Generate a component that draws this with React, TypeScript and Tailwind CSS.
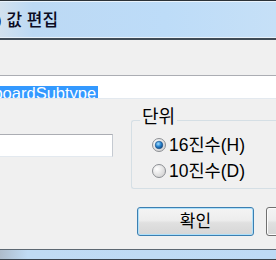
import React from "react";

function Radio({ checked, label }: { checked?: boolean; label: string }) {
  return (
    <div className="flex items-center h-[20px] gap-[3px]">
      <svg width="14" height="14" viewBox="0 0 14 14" className="shrink-0">
        <defs>
          <radialGradient id={checked ? "rgc" : "rgu"} cx="0.35" cy="0.35" r="0.75">
            <stop offset="0" stopColor="#ffffff" />
            <stop offset="1" stopColor="#d0d0d0" />
          </radialGradient>
          <radialGradient id="dot" cx="0.4" cy="0.35" r="0.7">
            <stop offset="0" stopColor="#a8e0ff" />
            <stop offset="0.5" stopColor="#2a86d0" />
            <stop offset="1" stopColor="#0b3f78" />
          </radialGradient>
        </defs>
        <circle cx="7" cy="7" r="6.5" fill={checked ? "url(#rgc)" : "url(#rgu)"} stroke="#8c8f93" strokeWidth="1" />
        {checked && <circle cx="7" cy="7" r="3.8" fill="url(#dot)" stroke="#1b4f86" strokeWidth="0.6" />}
      </svg>
      <span className="text-[17.5px] leading-[20px] whitespace-nowrap">{label}</span>
    </div>
  );
}

export default function App() {
  return (
    <div className="w-[276px] h-[260px] overflow-hidden flex flex-col bg-[#f0f0f0] text-black font-['Liberation_Sans','Noto_Sans_CJK_KR',sans-serif]">
      {/* title bar */}
      <div className="h-[1px] shrink-0 bg-[#2b3238]" />
      <div className="h-[36px] shrink-0 flex items-center pt-[2px] border-t border-[#e9f3fc] bg-[linear-gradient(90deg,#d2e1ee_0%,#bcd9f4_12%,#bddcf8_60%,#c6e0f7_100%)] text-[17px] font-medium text-[#0a0a22] whitespace-nowrap">
        <span className="-ml-[4px]">) 값 편집</span>
      </div>
      <div className="h-[1px] shrink-0 bg-[#e7f1fa]" />
      <div className="h-[2px] shrink-0 bg-[#3f4b56]" />

      {/* body */}
      <div className="flex-1 flex flex-col min-h-0">
        <div className="mt-[35px] h-[24px] shrink-0 bg-white border-t border-b border-t-[#abadb3] border-b-[#e3e9ef] pt-[6px] whitespace-nowrap overflow-hidden">
          <span className="inline-block -ml-[35px] h-[15px] leading-[15px] bg-[#3399ff] text-white text-[16.5px] pr-[2px]">KeyboardSubtype</span>
        </div>

        <div className="mt-[21px] flex items-start">
          <div className="mt-[14px] w-[113px] h-[23px] shrink-0 bg-white border border-l-0 border-[#e3e9ef] border-t-[#abadb3] border-r-[#c5cad1]" />
          <div className="relative ml-[18px] w-[170px] h-[69px] shrink-0 border border-r-0 border-[#d5dfe5] rounded-l-[3px] pt-[14px] pl-[20px] flex flex-col gap-[6px]">
            <span className="absolute left-[8px] -top-[13px] bg-[#f0f0f0] px-[2px] text-[18px] leading-[18px]">단위</span>
            <Radio checked label="16진수(H)" />
            <Radio label="10진수(D)" />
          </div>
        </div>

        <div className="mt-[18px] flex gap-[12px] pl-[137px]">
          <button className="shrink-0 w-[117px] h-[29px] rounded-[3px] border border-[#3c7fb1] bg-[linear-gradient(#f4f4f4,#ededed_45%,#e0e0e0_55%,#d6d6d6)] shadow-[inset_0_0_0_1px_#aee0fa] text-[17px] leading-[20px]">
            확인
          </button>
          <button className="shrink-0 w-[117px] h-[29px] rounded-[3px] border border-[#707070] bg-[linear-gradient(#f4f4f4,#ededed_45%,#e0e0e0_55%,#d6d6d6)] shadow-[inset_0_0_0_1px_#fcfcfc] text-[17px] leading-[20px]">
            취소
          </button>
        </div>
      </div>

      {/* bottom frame */}
      <div className="h-[1px] shrink-0 bg-[#5d6872]" />
      <div className="h-[9px] shrink-0 bg-[linear-gradient(90deg,#aebccb,#c0dbf3_10%,#bedaf5)]" />
      <div className="h-[1px] shrink-0 bg-[#3a434c]" />
    </div>
  );
}
